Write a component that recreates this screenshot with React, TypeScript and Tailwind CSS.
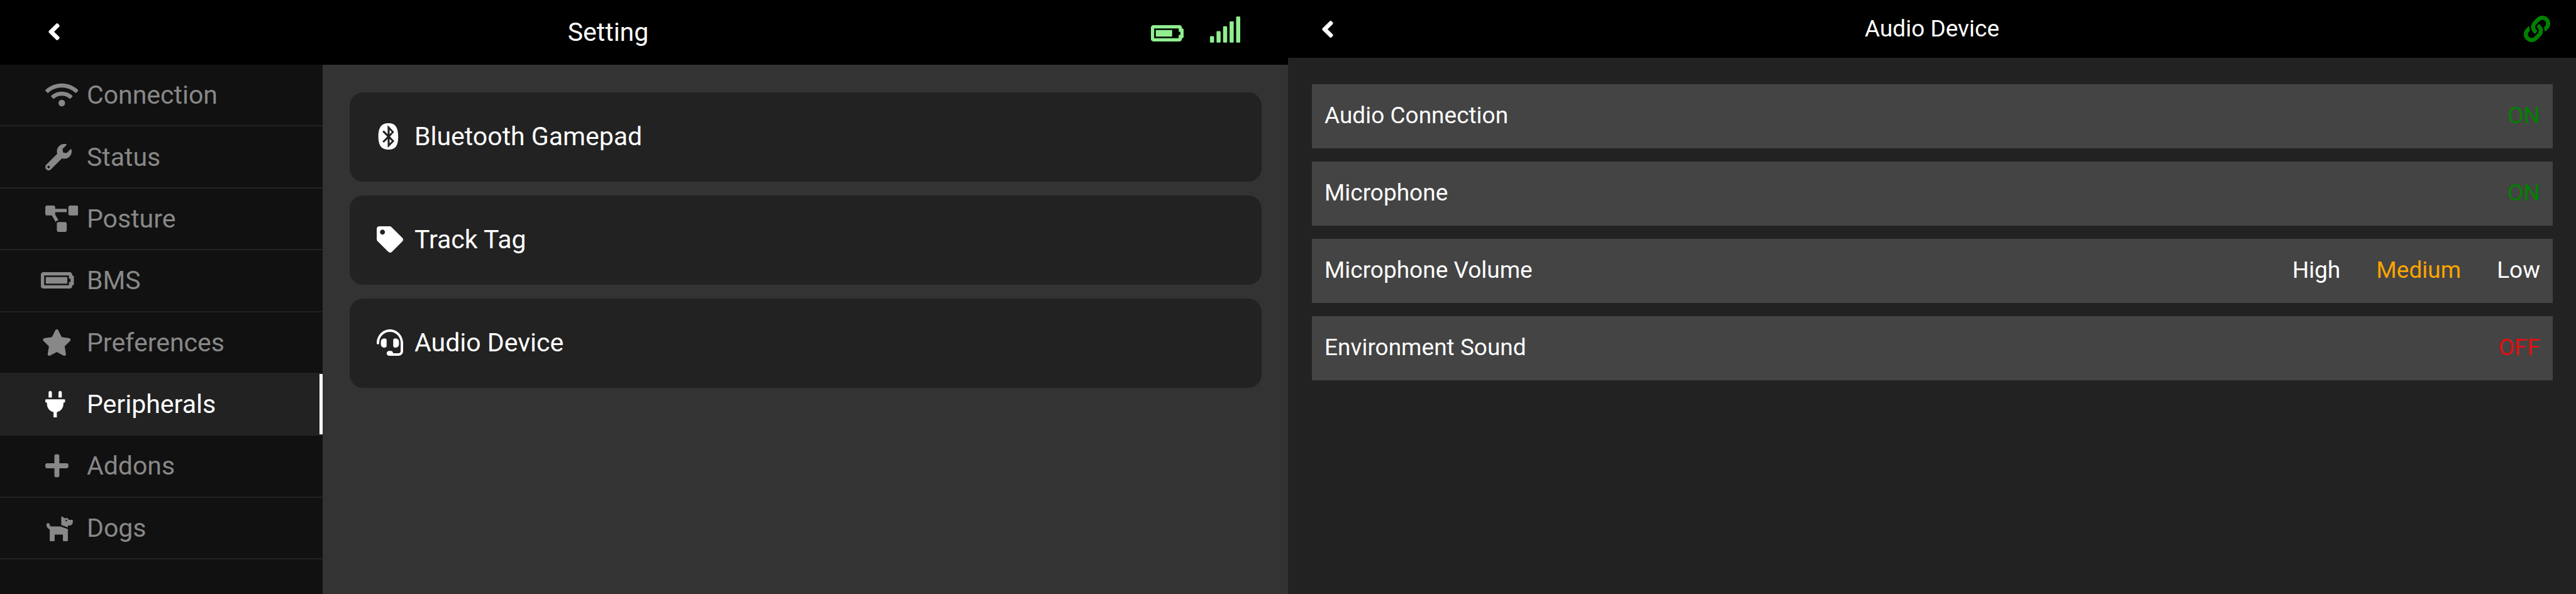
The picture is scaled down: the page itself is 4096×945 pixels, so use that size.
import type { ReactNode } from 'react';
import {
  FaAngleLeft,
  FaBatteryFull,
  FaBatteryThreeQuarters,
  FaBluetooth,
  FaDog,
  FaHeadset,
  FaLink,
  FaPlug,
  FaPlus,
  FaProjectDiagram,
  FaSignal,
  FaStar,
  FaTag,
  FaWifi,
  FaWrench,
} from 'react-icons/fa';

// The view boxes share one scale and only differ in how far the glyph is indented.
const menu = [
  { label: 'Connection', Icon: FaWifi, viewBox: '-98 0 732 512' },
  { label: 'Status', Icon: FaWrench, viewBox: '-98 0 732 512' },
  { label: 'Posture', Icon: FaProjectDiagram, viewBox: '-98 0 732 512' },
  { label: 'BMS', Icon: FaBatteryFull, viewBox: '-12 0 732 512' },
  { label: 'Preferences', Icon: FaStar, viewBox: '-33 0 732 512' },
  { label: 'Peripherals', Icon: FaPlug, viewBox: '-98 0 732 512' },
  { label: 'Addons', Icon: FaPlus, viewBox: '-98 0 732 512' },
  { label: 'Dogs', Icon: FaDog, viewBox: '-88 0 732 512' },
];

const devices = [
  { label: 'Bluetooth Gamepad', Icon: FaBluetooth },
  { label: 'Track Tag', Icon: FaTag },
  { label: 'Audio Device', Icon: FaHeadset },
];

function Row({ label, children }: { label: string; children: ReactNode }) {
  return (
    <li className="flex h-[102px] items-center justify-between bg-[#444] px-5 pb-[2px]">
      <span>{label}</span>
      {children}
    </li>
  );
}

function SettingScreen() {
  return (
    <section className="flex min-h-screen flex-1 flex-col bg-[#333] text-[41px] leading-[48px]">
      <header className="grid h-[103px] grid-cols-[513px_1fr_513px] items-center bg-black pb-[2px]">
        <button type="button" aria-label="Back" className="w-fit pl-[75px]">
          <FaAngleLeft className="h-[43px] w-[22px]" />
        </button>
        <h1 className="pr-[114px] text-center">Setting</h1>
        <div className="flex items-center justify-end gap-10 pr-[74px] text-[#90ee90]">
          <FaBatteryThreeQuarters className="mt-1 h-[42px] w-[52px]" />
          <FaSignal className="mb-2 h-[42px] w-[52px]" />
        </div>
      </header>
      <div className="flex flex-1">
        <nav className="w-[513px] bg-[#111]">
          <ul className="grid h-[787px] auto-rows-fr">
            {menu.map(({ label, Icon, viewBox }) => {
              const active = label === 'Peripherals';
              return (
                <li key={label} className="border-b-2 border-[#222]">
                  <a
                    href={'#' + label.toLowerCase()}
                    aria-current={active ? 'page' : undefined}
                    className={
                      active
                        ? 'flex h-full items-center gap-[14px] border-r-5 border-white bg-[#222] pl-16 text-white'
                        : 'flex h-full items-center gap-[14px] pl-16 text-[#888]'
                    }
                  >
                    <Icon viewBox={viewBox} className="h-[42px] w-[60px]" />
                    {label}
                  </a>
                </li>
              );
            })}
          </ul>
        </nav>
        <main className="flex flex-1 flex-col gap-[22px] pr-[42px] pl-[43px] pt-11">
          {devices.map(({ label, Icon }) => (
            <button
              key={label}
              type="button"
              className="flex h-[142px] items-center gap-[18px] rounded-[21px] bg-[#222] px-[43px] pb-[2px] text-left"
            >
              <Icon preserveAspectRatio="xMinYMid meet" className="size-[42px]" />
              {label}
            </button>
          ))}
        </main>
      </div>
    </section>
  );
}

function AudioScreen() {
  return (
    <section className="min-h-screen flex-1 bg-[#222] text-[37px] leading-[42px]">
      <header className="grid h-[92px] grid-cols-[1fr_auto_1fr] items-center bg-black">
        <button type="button" aria-label="Back" className="w-fit pl-[52px]">
          <FaAngleLeft className="h-[43px] w-[22px]" />
        </button>
        <h1>Audio Device</h1>
        <a href="#link" aria-label="Link" className="justify-self-end pr-[41px] text-[#008000]">
          <FaLink className="size-[42px]" />
        </a>
      </header>
      <ul className="flex flex-col gap-[21px] pr-[37px] pl-[38px] pt-[42px]">
        <Row label="Audio Connection">
          <button type="button" className="text-[#008000]">ON</button>
        </Row>
        <Row label="Microphone">
          <button type="button" className="text-[#008000]">ON</button>
        </Row>
        <Row label="Microphone Volume">
          <div className="flex gap-[57px]">
            <button type="button">High</button>
            <button type="button" className="text-[#ffa500]">Medium</button>
            <button type="button">Low</button>
          </div>
        </Row>
        <Row label="Environment Sound">
          <button type="button" className="text-[#e01010]">OFF</button>
        </Row>
      </ul>
    </section>
  );
}

export default function App() {
  return (
    <div className="flex min-h-screen font-['Roboto',sans-serif] text-white">
      <SettingScreen />
      <AudioScreen />
    </div>
  );
}
